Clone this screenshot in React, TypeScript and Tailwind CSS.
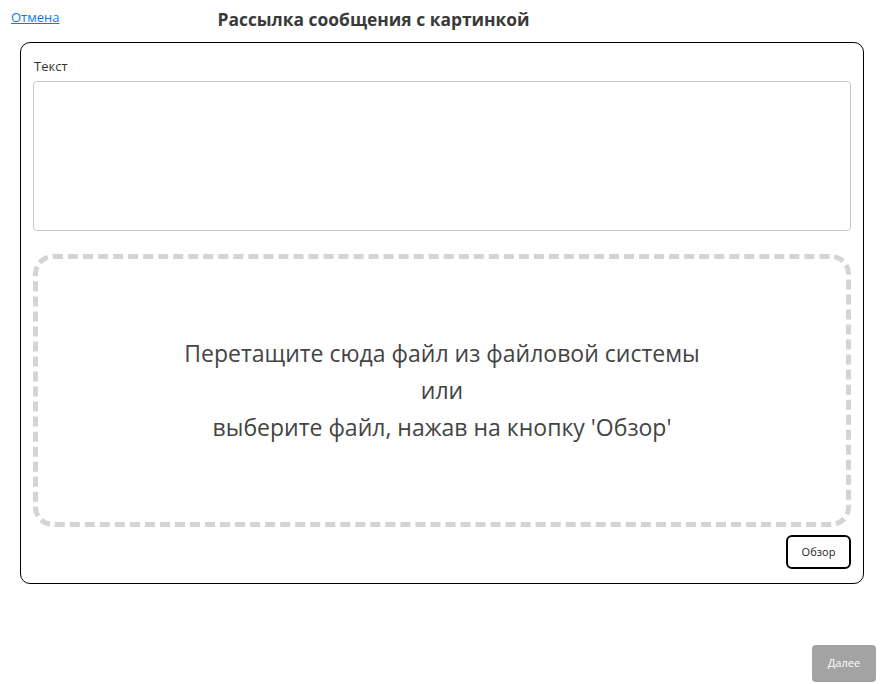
import React from "react";

const App: React.FC = () => {
  return (
    <div
      className="w-[881px] h-[684px] bg-white text-[#333] flex flex-col"
      style={{ fontFamily: "'Open Sans', 'Noto Sans', sans-serif" }}
    >
      <div className="flex items-start h-[42px] pl-[11px] pt-[8px]">
        <a href="#" className="text-[13px] text-[#1a73e8] underline leading-[18px]">
          Отмена
        </a>
        <h1 className="ml-[158px] -mt-[1px] text-[17.4px] font-bold text-[#3a3a3a] leading-[24px]">
          Рассылка сообщения с картинкой
        </h1>
      </div>

      <div className="mx-[20px] w-[844px] border border-black rounded-[10px] px-[12px] pt-[14px] pb-[14px] flex flex-col">
        <label className="text-[13px] text-[#333] leading-[18px] ml-[1px]">Текст</label>
        <textarea className="mt-[6px] h-[150px] w-[818px] border border-[#c8c8c8] rounded-[4px] resize-none outline-none p-2" />
        <div className="mt-[23px] h-[273px] w-[818px] border-[5px] border-dashed border-[#d4d4d4] rounded-[20px] flex flex-col items-center justify-center text-[23px] leading-[37px] text-[#444] text-center">
          <span>Перетащите сюда файл из файловой системы</span>
          <span>или</span>
          <span>выберите файл, нажав на кнопку 'Обзор'</span>
        </div>
        <div className="flex justify-end mt-[8px]">
          <button className="w-[65px] h-[34px] border-2 border-black rounded-[6px] text-[11px] text-[#222]">
            Обзор
          </button>
        </div>
      </div>

      <div className="flex justify-end mt-auto pr-[5px] pb-[2px]">
        <button className="w-[64px] h-[37px] bg-[#a3a3a3] text-white rounded-[4px] text-[11px]">
          Далее
        </button>
      </div>
    </div>
  );
};

export default App;
